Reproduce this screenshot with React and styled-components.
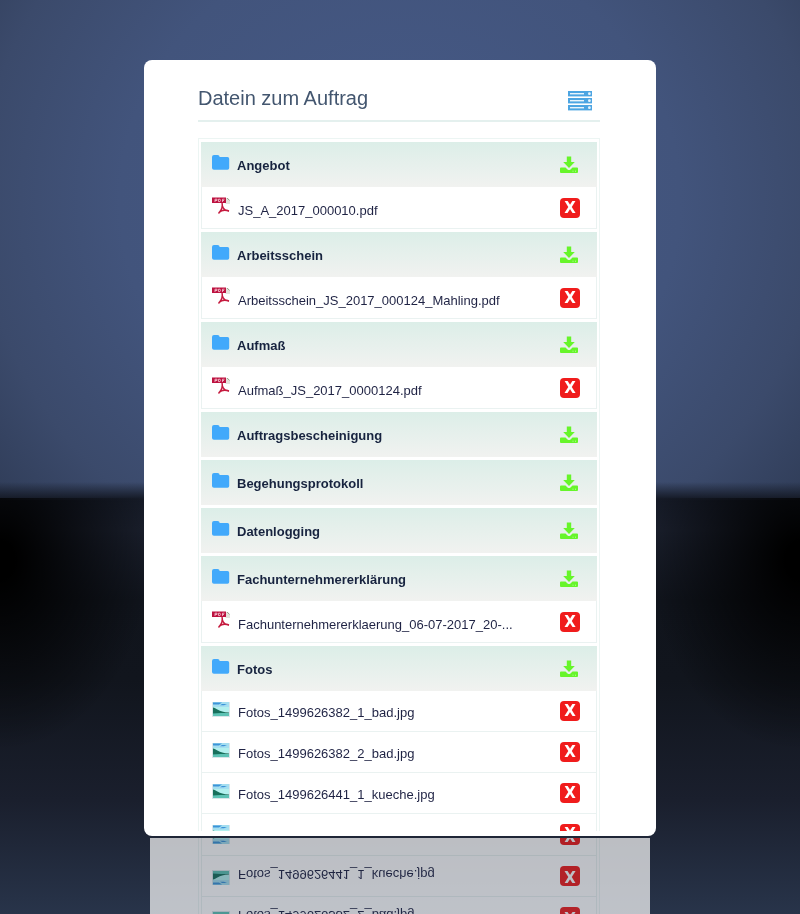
import React from 'react';
import styled, { createGlobalStyle } from 'styled-components';

const GlobalStyle = createGlobalStyle`
    * {
        box-sizing: border-box;
    }

    body {
        margin: 0;
        font-family: "Liberation Sans", Arial, sans-serif;
        font-size: 13px;
        color: #1f2344;
        background: #0b0d12;
    }
`;

const Page = styled.main`
    display: flex;
    justify-content: center;
    height: 100vh;
    padding: 60px 16px 78px;
    overflow: hidden;
    background:
        radial-gradient(ellipse 150px 190px at 0 60px, #000 10%, rgba(0, 0, 0, 0)) 0 500px / 50% 300px no-repeat,
        radial-gradient(ellipse 150px 190px at 100% 60px, #000 10%, rgba(0, 0, 0, 0)) 100% 500px / 50% 300px no-repeat,
        linear-gradient(to right, #06070a, rgba(6, 7, 10, 0) 18%, rgba(6, 7, 10, 0) 82%, #06070a) 0 498px / 100% 2px no-repeat,
        linear-gradient(to bottom, transparent 482px, #151a26 499px, #191e2b 530px, #10141c 600px, #11151d 680px, #1a1f2d 800px, #28344a 914px),
        radial-gradient(ellipse 560px 520px at 50% 200px, #465a88 0, #42547c 50%, #3b4a6b 75%, #2b3750 100%);
`;

const Card = styled.section`
    width: 100%;
    max-width: 512px;
    padding: 6px 6px 5px;
    border-radius: 8px;
    background: #fff;
`;

// the mirror image on the floor belongs to the screen, not to the white frame
const Screen = styled.div`
    height: 100%;
    padding: 14px 50px 0 48px;
    overflow: hidden;
    background: #fff;
    -webkit-box-reflect: below 7px linear-gradient(rgba(0, 0, 0, 0.7), rgba(0, 0, 0, 0.7));
`;

const Header = styled.header`
    display: flex;
    align-items: center;
    justify-content: space-between;
    height: 42px;
    padding: 2px 7px 0 0;
    border-bottom: 2px solid #e4f0ee;
`;

const Title = styled.h1`
    margin: 0 0 6px;
    font-size: 20px;
    font-weight: normal;
    line-height: 24px;
    color: #43566f;
`;

const IconButton = styled.button`
    display: flex;
    flex: none;
    padding: 0;
    border: 0;
    background: none;
    cursor: pointer;
`;

const Folders = styled.div`
    display: flex;
    flex-direction: column;
    gap: 3px;
    margin-top: 16px;
    padding: 3px 2px;
    border: 1px solid #ecf5f3;
`;

const FolderHead = styled.div`
    display: flex;
    align-items: center;
    height: 45px;
    padding: 0 19px 0 11px;
    background: linear-gradient(#dceee8, #f1f2f0);
`;

const FolderName = styled.h2`
    flex: 1;
    margin: 2px 0 0 7px;
    font-size: 13px;
    line-height: 16px;
    color: #17233f;
`;

const FileList = styled.ul`
    margin: 0;
    padding: 0;
    list-style: none;
`;

const FileRow = styled.li`
    display: flex;
    align-items: center;
    height: ${props => (props.$photo ? 41 : 42)}px;
    padding: 0 16px 0 10px;
    border: 1px solid #eaf2f1;
    border-top: 0;
`;

const FileName = styled.a`
    flex: 1;
    margin: ${props => (props.$photo ? 3 : 6)}px 40px 0 8px;
    overflow: hidden;
    line-height: 16px;
    white-space: nowrap;
    text-overflow: ellipsis;
    color: inherit;
    text-decoration: none;
`;

const Icon = styled.svg`
    flex: none;
    width: 18px;
    height: 18px;
    margin-bottom: 4px;
`;

const DeleteButton = styled(IconButton)`
    align-items: center;
    justify-content: center;
    width: 20px;
    height: 20px;
    border-radius: 4px;
    font: bold 15px/20px "DejaVu Sans", sans-serif;
    color: #fff;
    background: #f01c1c;
`;

function ServerIcon() {
    return (
        <svg width="26" height="20" viewBox="0 0 26 20">
            {[0, 7, 14].map(y => (
                <g key={y}>
                    <rect x="1" y={y} width="24" height="5.4" fill="#4da5e2" />
                    <path d={`M3 ${y + 2.7}h14`} stroke="#e8f4fc" strokeWidth="1.4" />
                    <circle cx="22.4" cy={y + 2.7} r="1.4" fill="#e8f4fc" />
                </g>
            ))}
        </svg>
    );
}

function FolderIcon() {
    return (
        <Icon viewBox="0 0 18 18" fill="#41a9fb">
            <path d="M2 1H5.500q2 0 2.200 2H15.500q1.700 0 1.700 1.700v9.300q0 1.800-1.700 1.800H2Q0 15.800 0 14V3Q0 1 2 1z" />
        </Icon>
    );
}

function DownloadIcon() {
    return (
        <svg width="18" height="18" viewBox="0 0 18 18" fill="#66f52a">
            <path d="M6.800 0.500h4.400v5.500h3.600L9 12 3.200 6h3.600z" />
            <path d="M1 11.500h4.500l2 2q1.500 1.200 3 0l2-2H17q1 0 1 1V16q0 1-1 1H1q-1 0-1-1v-3.500q0-1 1-1z" />
            <path d="M12.500 15.200h1M15 15.200h1" stroke="#b8ffa0" />
        </svg>
    );
}

function PdfIcon() {
    return (
        <Icon viewBox="0 0 18 18">
            <path d="M13.500 1h2.500l2 2v4h-4.500z" fill="#e3e3dc" />
            <path d="M15 1l2.500 2.500" stroke="#9aa690" />
            <rect width="14" height="5.500" y="0.500" fill="#bd1240" />
            <path d="M3 5V2.200h2v1.300h-2M6.500 2.200h1.500l.6 1.200-.6 1.200H6.500zM10.500 5V2.200h2M10.500 3.500h1.500" fill="none" stroke="#f6cbd5" strokeWidth="0.800" />
            <path d="M10 6c1 3 .5 6-3.500 10.500M10.300 8.500c.5 3 2.700 5 6.700 5.700M7 15.500c2.500-2.500 6-3 10-1.500" fill="none" stroke="#c51a3e" strokeWidth="1.500" />
        </Icon>
    );
}

function PhotoIcon() {
    return (
        <Icon viewBox="0 0 18 18">
            <rect y="2" width="18" height="15" fill="#d9e6ea" />
            <path d="M1 2h16v8H1z" fill="#a4def0" />
            <path d="M1 2.500h9l-3 2H1zM10 4h5l-3 1.200H8z" fill="#3d93d8" />
            <path d="M1 7h16v5H1z" fill="#b2f0ee" />
            <path d="M1 7.500c3 0 5 4.500 16 5V14H1z" fill="#17705c" />
            <path d="M1 13.500c5-1 11-.5 16-.5v3H1z" fill="#5cc2b4" />
        </Icon>
    );
}

const folders = [
    { name: 'Angebot', files: ['JS_A_2017_000010.pdf'] },
    { name: 'Arbeitsschein', files: ['Arbeitsschein_JS_2017_000124_Mahling.pdf'] },
    { name: 'Aufmaß', files: ['Aufmaß_JS_2017_0000124.pdf'] },
    { name: 'Auftragsbescheinigung', files: [] },
    { name: 'Begehungsprotokoll', files: [] },
    { name: 'Datenlogging', files: [] },
    { name: 'Fachunternehmererklärung', files: ['Fachunternehmererklaerung_06-07-2017_20-...'] },
    {
        name: 'Fotos',
        photos: true,
        files: [
            'Fotos_1499626382_1_bad.jpg',
            'Fotos_1499626382_2_bad.jpg',
            'Fotos_1499626441_1_kueche.jpg',
            '',
        ],
    },
];

function File({ name, photo }) {
    return (
        <FileRow $photo={photo}>
            {photo ? <PhotoIcon /> : <PdfIcon />}
            <FileName href="#" $photo={photo}>{name}</FileName>
            <DeleteButton type="button" aria-label={`${name || 'Datei'} löschen`}>X</DeleteButton>
        </FileRow>
    );
}

function Folder({ name, files, photos }) {
    return (
        <section>
            <FolderHead>
                <FolderIcon />
                <FolderName>{name}</FolderName>
                <IconButton type="button" aria-label={`${name} herunterladen`}>
                    <DownloadIcon />
                </IconButton>
            </FolderHead>
            {files.length > 0 && (
                <FileList>
                    {files.map(file => <File key={file} name={file} photo={photos} />)}
                </FileList>
            )}
        </section>
    );
}

function App() {
    return (
        <Page>
            <GlobalStyle />
            <Card>
                <Screen>
                    <Header>
                        <Title>Datein zum Auftrag</Title>
                        <IconButton type="button" aria-label="Ansicht wechseln">
                            <ServerIcon />
                        </IconButton>
                    </Header>
                    <Folders>
                        {folders.map(folder => (
                            <Folder key={folder.name} {...folder} />
                        ))}
                    </Folders>
                </Screen>
            </Card>
        </Page>
    );
}

export default App;
